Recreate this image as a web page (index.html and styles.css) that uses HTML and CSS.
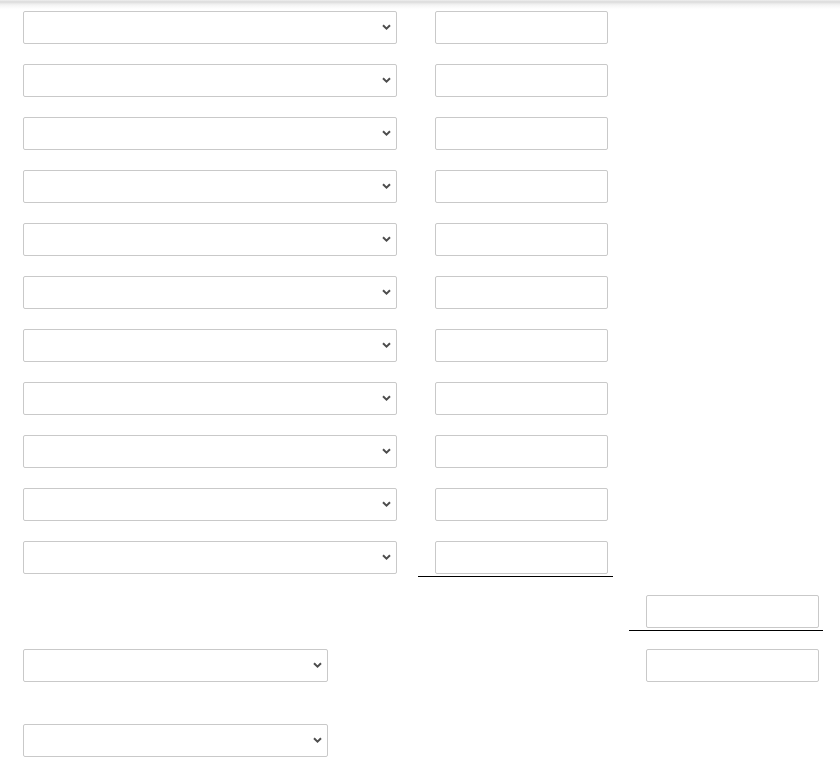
FILE: index.html
```html
<!DOCTYPE html>
<html lang="en">
<head>
<meta charset="utf-8">
<title>Form</title>
<link rel="stylesheet" href="styles.css">
</head>
<body>
<div class="top-shadow"></div>
<main class="sheet">
  <div class="lines">
    <div class="row"><span class="select-wrap wide"><select class="field"><option></option></select><svg class="chev" viewBox="0 0 9 6"><path d="M1 1.2 L4.5 4.6 L8 1.2"/></svg></span><input class="field amount" type="text"></div>
    <div class="row"><span class="select-wrap wide"><select class="field"><option></option></select><svg class="chev" viewBox="0 0 9 6"><path d="M1 1.2 L4.5 4.6 L8 1.2"/></svg></span><input class="field amount" type="text"></div>
    <div class="row"><span class="select-wrap wide"><select class="field"><option></option></select><svg class="chev" viewBox="0 0 9 6"><path d="M1 1.2 L4.5 4.6 L8 1.2"/></svg></span><input class="field amount" type="text"></div>
    <div class="row"><span class="select-wrap wide"><select class="field"><option></option></select><svg class="chev" viewBox="0 0 9 6"><path d="M1 1.2 L4.5 4.6 L8 1.2"/></svg></span><input class="field amount" type="text"></div>
    <div class="row"><span class="select-wrap wide"><select class="field"><option></option></select><svg class="chev" viewBox="0 0 9 6"><path d="M1 1.2 L4.5 4.6 L8 1.2"/></svg></span><input class="field amount" type="text"></div>
    <div class="row"><span class="select-wrap wide"><select class="field"><option></option></select><svg class="chev" viewBox="0 0 9 6"><path d="M1 1.2 L4.5 4.6 L8 1.2"/></svg></span><input class="field amount" type="text"></div>
    <div class="row"><span class="select-wrap wide"><select class="field"><option></option></select><svg class="chev" viewBox="0 0 9 6"><path d="M1 1.2 L4.5 4.6 L8 1.2"/></svg></span><input class="field amount" type="text"></div>
    <div class="row"><span class="select-wrap wide"><select class="field"><option></option></select><svg class="chev" viewBox="0 0 9 6"><path d="M1 1.2 L4.5 4.6 L8 1.2"/></svg></span><input class="field amount" type="text"></div>
    <div class="row"><span class="select-wrap wide"><select class="field"><option></option></select><svg class="chev" viewBox="0 0 9 6"><path d="M1 1.2 L4.5 4.6 L8 1.2"/></svg></span><input class="field amount" type="text"></div>
    <div class="row"><span class="select-wrap wide"><select class="field"><option></option></select><svg class="chev" viewBox="0 0 9 6"><path d="M1 1.2 L4.5 4.6 L8 1.2"/></svg></span><input class="field amount" type="text"></div>
    <div class="row"><span class="select-wrap wide"><select class="field"><option></option></select><svg class="chev" viewBox="0 0 9 6"><path d="M1 1.2 L4.5 4.6 L8 1.2"/></svg></span><div class="sum-cell"><input class="field amount-in" type="text"></div></div>
  </div>
  <div class="subtotal-row">
    <div class="total-cell"><input class="field amount-in" type="text"></div>
  </div>
  <div class="final-row">
    <span class="select-wrap narrow"><select class="field"><option></option></select><svg class="chev" viewBox="0 0 9 6"><path d="M1 1.2 L4.5 4.6 L8 1.2"/></svg></span>
    <input class="field amount final-amount" type="text">
  </div>
  <div class="extra-row">
    <span class="select-wrap narrow"><select class="field"><option></option></select><svg class="chev" viewBox="0 0 9 6"><path d="M1 1.2 L4.5 4.6 L8 1.2"/></svg></span>
  </div>
</main>
</body>
</html>
```
FILE: styles.css
```css
html, body {
  margin: 0;
  padding: 0;
  background: #ffffff;
  font-family: "Liberation Sans", Arial, sans-serif;
  font-size: 14px;
}

.top-shadow {
  position: absolute;
  top: 0;
  left: 0;
  right: 0;
  height: 9px;
  background: linear-gradient(to bottom, #efefef 0px, #dadada 2px, #e6e6e6 3px, #f4f4f4 5px, #ffffff 9px);
  pointer-events: none;
}

.sheet {
  padding: 11px 0 0 23px;
  display: flex;
  flex-direction: column;
}

.lines {
  display: flex;
  flex-direction: column;
  gap: 20px;
}

.row {
  display: flex;
  align-items: flex-start;
}

.field {
  box-sizing: border-box;
  height: 33px;
  margin: 0;
  border: 1px solid #c9c9c9;
  border-radius: 2px;
  background: #ffffff;
  font: inherit;
  color: #333;
  outline: none;
}

.select-wrap {
  position: relative;
  display: block;
  flex: none;
}

.select-wrap select {
  -webkit-appearance: none;
  appearance: none;
  width: 100%;
  padding: 0 24px 0 8px;
}

.select-wrap.wide { width: 374px; }
.select-wrap.narrow { width: 305px; }

.chev {
  position: absolute;
  right: 6px;
  top: 13px;
  width: 9px;
  height: 6px;
  pointer-events: none;
}

.chev path {
  fill: none;
  stroke: #4d4d4d;
  stroke-width: 2;
}

.amount {
  width: 173px;
  margin-left: 38px;
  padding: 0 8px;
}

.amount-in {
  width: 173px;
  padding: 0 8px;
}

.sum-cell {
  margin-left: 21px;
  width: 195px;
  box-sizing: border-box;
  padding: 0 5px 2px 17px;
  border-bottom: 1px solid #000000;
}

.subtotal-row {
  display: flex;
  margin-top: 18px;
  padding-left: 606px;
}

.total-cell {
  width: 194px;
  box-sizing: border-box;
  padding: 0 4px 2px 17px;
  border-bottom: 1px solid #000000;
}

.final-row {
  display: flex;
  align-items: flex-start;
  margin-top: 18px;
}

.final-amount {
  margin-left: 318px;
}

.extra-row {
  display: flex;
  margin-top: 42px;
}
```
